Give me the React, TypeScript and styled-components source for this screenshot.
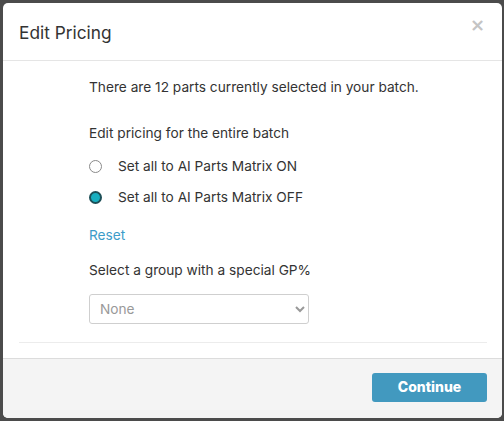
import React, { useState } from 'react';
import styled, { createGlobalStyle } from 'styled-components';

const GlobalStyle = createGlobalStyle`
  html, body {
    margin: 0;
    padding: 0;
    background: #4b4b4b;
  }
  body {
    font-family: Inter, "Noto Sans", sans-serif;
    color: #333;
  }
`;

const Backdrop = styled.div`
  width: 504px;
  height: 421px;
  padding: 3px 2px 3px 3px;
  box-sizing: border-box;
  background: #4b4b4b;
`;

const Modal = styled.div`
  height: 100%;
  background: #fff;
  border-radius: 5px;
  overflow: hidden;
  display: flex;
  flex-direction: column;
`;

const Header = styled.div`
  height: 58px;
  box-sizing: border-box;
  border-bottom: 1px solid #e5e5e5;
  display: flex;
  align-items: center;
  justify-content: space-between;
  padding: 0 16px;
`;

const Title = styled.h4`
  margin: 0;
  font-size: 17.3px;
  font-weight: 400;
  color: #333;
  padding-top: 2px;
`;

const Close = styled.button`
  border: 0;
  background: none;
  padding: 0;
  margin-top: -14px;
  margin-right: 1px;
  font-size: 18px;
  font-weight: 700;
  line-height: 1;
  color: #c4c4c4;
  cursor: pointer;
  font-family: "DejaVu Sans", sans-serif;
`;

const Body = styled.div`
  flex: 1;
  padding: 16px 15px 0 16px;
  display: flex;
  flex-direction: column;
`;

const Content = styled.div`
  padding-left: 70px;
  display: flex;
  flex-direction: column;
  font-size: 13.7px;
  line-height: 20px;
`;

const Text = styled.p<{ $gap?: number }>`
  margin: 0;
  margin-top: ${(p) => p.$gap ?? 0}px;
`;

const RadioRow = styled.label<{ $gap: number }>`
  display: flex;
  align-items: center;
  gap: 16px;
  margin-top: ${(p) => p.$gap}px;
  cursor: pointer;
`;

const Radio = styled.input`
  appearance: none;
  margin: 0;
  width: 13px;
  height: 13px;
  border-radius: 50%;
  border: 1px solid #8a8a8a;
  background: #fff;
  box-sizing: border-box;

  &:checked {
    border: 2px solid #1d4f57;
    background: #18aebf;
  }
`;

const ResetLink = styled.a`
  margin-top: 18px;
  color: #3d9cc9;
  text-decoration: none;
  cursor: pointer;
  align-self: flex-start;
`;

const Select = styled.select`
  margin-top: 14px;
  width: 220px;
  height: 30px;
  border: 1px solid #cfcfcf;
  border-radius: 3px;
  background: #fff;
  color: #999;
  font-family: inherit;
  font-size: 13.7px;
  padding: 0 6px;
`;

const Divider = styled.hr`
  border: 0;
  border-top: 1px solid #ececec;
  margin: 18px 0 0;
`;

const Footer = styled.div`
  height: 60px;
  box-sizing: border-box;
  border-top: 1px solid #dcdcdc;
  background: #f4f4f4;
  display: flex;
  justify-content: flex-end;
  align-items: flex-start;
  padding: 14px 15px 0;
`;

const Button = styled.button`
  width: 115px;
  height: 29px;
  border: 0;
  border-radius: 3px;
  background: #4299bf;
  color: #fff;
  font-family: inherit;
  font-weight: 800;
  font-size: 14px;
  line-height: 1;
  padding: 0 0 2px;
  cursor: pointer;
`;

export default function App() {
  const [matrix, setMatrix] = useState<'on' | 'off'>('off');

  return (
    <>
      <GlobalStyle />
      <Backdrop>
        <Modal>
          <Header>
            <Title>Edit Pricing</Title>
            <Close aria-label="Close">×</Close>
          </Header>
          <Body>
            <Content>
              <Text>There are 12 parts currently selected in your batch.</Text>
              <Text $gap={26}>Edit pricing for the entire batch</Text>
              <RadioRow $gap={13}>
                <Radio
                  type="radio"
                  name="matrix"
                  checked={matrix === 'on'}
                  onChange={() => setMatrix('on')}
                />
                Set all to AI Parts Matrix ON
              </RadioRow>
              <RadioRow $gap={11}>
                <Radio
                  type="radio"
                  name="matrix"
                  checked={matrix === 'off'}
                  onChange={() => setMatrix('off')}
                />
                Set all to AI Parts Matrix OFF
              </RadioRow>
              <ResetLink onClick={() => setMatrix('off')}>Reset</ResetLink>
              <Text $gap={15}>Select a group with a special GP%</Text>
              <Select defaultValue="none">
                <option value="none">None</option>
              </Select>
            </Content>
            <Divider />
          </Body>
          <Footer>
            <Button>Continue</Button>
          </Footer>
        </Modal>
      </Backdrop>
    </>
  );
}
